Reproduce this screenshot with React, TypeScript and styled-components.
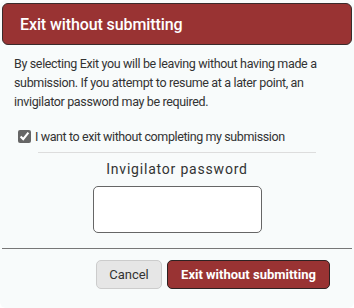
import styled, { createGlobalStyle } from "styled-components";

const GlobalStyle = createGlobalStyle`
	html, body {
		margin: 0;
		padding: 0;
		background: #ffffff;
	}
	body {
		font-family: Roboto, "Noto Sans", sans-serif;
		color: #333333;
	}
`;

const Dialog = styled.div`
	width: 354px;
	height: 308px;
	box-sizing: border-box;
	background: #f8fbfb;
	border-radius: 6px;
	padding: 3px 2px 0;
	display: flex;
	flex-direction: column;
`;

const Header = styled.div`
	height: 42px;
	box-sizing: border-box;
	background: #993333;
	border: 1px solid #3a2a2a;
	border-radius: 6px;
	display: flex;
	align-items: center;
	padding: 0 17px;
	color: #ffffff;
	font-size: 16px;
	font-weight: 500;
	letter-spacing: -0.1px;
`;

const Body = styled.div`
	padding: 9px 12px 0;
	display: flex;
	flex-direction: column;
`;

const Message = styled.p`
	margin: 0;
	font-size: 12.5px;
	line-height: 19px;
	letter-spacing: -0.35px;
	color: #333333;
`;

const CheckRow = styled.label`
	display: flex;
	align-items: center;
	gap: 4px;
	margin: 18px 0 0 4px;
	font-size: 12.5px;
	letter-spacing: -0.4px;
	color: #333333;
`;

const Check = styled.input`
	width: 13px;
	height: 13px;
	margin: 0;
	accent-color: #666666;
`;

const Rule = styled.hr<{ $inset?: number; $top: number; $color: string }>`
	margin: ${(p) => p.$top}px ${(p) => p.$inset ?? 0}px 0;
	border: none;
	border-top: 1px solid ${(p) => p.$color};
`;

const PasswordBlock = styled.div`
	display: flex;
	flex-direction: column;
	align-items: center;
	margin-top: 8px;
`;

const PasswordLabel = styled.div`
	font-size: 14px;
	letter-spacing: 0.8px;
	color: #333333;
	margin-bottom: 9px;
`;

const PasswordInput = styled.input`
	width: 169px;
	height: 47px;
	box-sizing: border-box;
	border: 1px solid #666666;
	border-radius: 5px;
	background: #ffffff;
`;

const Footer = styled.div`
	display: flex;
	justify-content: flex-end;
	gap: 5px;
	padding: 11px 22px 0 0;
`;

const Button = styled.button<{ $primary?: boolean }>`
	height: 29px;
	box-sizing: border-box;
	border-radius: 5px;
	font-family: inherit;
	font-size: 13px;
	border: 1px solid ${(p) => (p.$primary ? "#2e2222" : "#cccccc")};
	background: ${(p) => (p.$primary ? "#993333" : "#e6e6e6")};
	color: ${(p) => (p.$primary ? "#ffffff" : "#333333")};
	font-weight: ${(p) => (p.$primary ? 700 : 400)};
	width: ${(p) => (p.$primary ? 163 : 66)}px;
	padding: 0;
`;

export default function App() {
	return (
		<>
			<GlobalStyle />
			<Dialog>
				<Header>Exit without submitting</Header>
				<Body>
					<Message>
						By selecting Exit you will be leaving without having made a submission. If you attempt
						to resume at a later point, an invigilator password may be required.
					</Message>
					<CheckRow>
						<Check type="checkbox" defaultChecked />
						I want to exit without completing my submission
					</CheckRow>
				</Body>
				<Rule $top={8} $inset={36} $color="#dddddd" />
				<PasswordBlock>
					<PasswordLabel>Invigilator password</PasswordLabel>
					<PasswordInput type="password" />
				</PasswordBlock>
				<Rule $top={15} $color="#777777" />
				<Footer>
					<Button>Cancel</Button>
					<Button $primary>Exit without submitting</Button>
				</Footer>
			</Dialog>
		</>
	);
}
